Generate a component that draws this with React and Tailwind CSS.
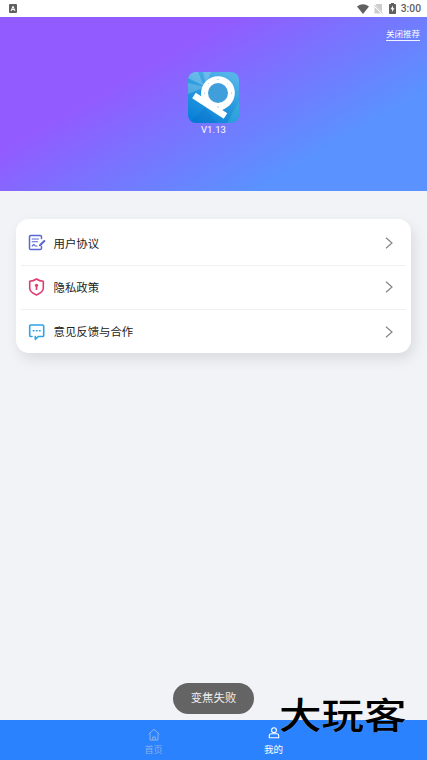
import React from "react";

const cjk = "font-['Roboto','Noto_Sans_CJK_SC',sans-serif]";

function StatusBar() {
  return (
    <div className="flex h-[17px] shrink-0 items-center bg-white pl-[9px] pr-[6px] text-[#606060]">
      <svg width="8" height="9" viewBox="0 0 8 9">
        <rect width="8" height="9" rx="1" fill="#606060" />
        <path d="M2 7 4 2.3 6 7M2.8 5.6h2.4" fill="none" stroke="#fff" strokeWidth="1" />
      </svg>
      <svg className="ml-auto" width="12" height="10" viewBox="0 0 12 10">
        <path d="M0 2.6Q6-2 12 2.6L6 10Z" fill="#606060" />
      </svg>
      <svg className="ml-[5px]" width="9" height="10" viewBox="0 0 9 10">
        <path d="M2.5 0H8v8L1.5 1.2ZM.5 3 7 9.5H.5Z" fill="#cdcdcd" />
        <path d="m0 .8 9 9" stroke="#bbb" strokeWidth=".8" />
      </svg>
      <svg className="ml-[6px]" width="7" height="11" viewBox="0 0 7 11">
        <path d="M2 0h3v1h1.3q.7 0 .7.7v8.6q0 .7-.7.7H.7Q0 11 0 10.300V1.700Q0 1 .7 1H2Z" fill="#606060" />
        <path d="M4 2.500 1.500 6.300h1.600v2.700L5.500 5.200H4Z" fill="#fff" />
      </svg>
      <span className="ml-[5px] mt-px font-['Roboto',sans-serif] text-[10.300px] font-medium leading-none">3:00</span>
    </div>
  );
}

function AppLogo() {
  return (
    <svg width="51" height="51" viewBox="0 0 51 51">
      <defs>
        <linearGradient id="logo" x1="0.200" y1="1" x2="0.700" y2="0">
          <stop offset="0" stopColor="#087fd8" />
          <stop offset=".55" stopColor="#2c9bde" />
          <stop offset="1" stopColor="#55b4ea" />
        </linearGradient>
        <clipPath id="tile"><rect width="51" height="51" rx="8" /></clipPath>
      </defs>
      <g clipPath="url(#tile)">
        <rect width="51" height="51" fill="url(#logo)" />
        <path d="M0 0h10l6 14L0 6Z" fill="#fff" opacity=".22" />
        <path d="M0 11 17 15 0 22Z" fill="#fff" opacity=".2" />
        <path d="M15 0h8l-5 14Z" fill="#fff" opacity=".2" />
        <path d="m39 51 12-22v22Z" fill="#55d2dc" opacity=".25" />
        <path d="m0 51 17-15 12 15Z" fill="#0866bd" opacity=".2" />
      </g>
      <path d="M13.300 19v7l20 13 4-3v-8H16Z" fill="#fff" />
      <circle cx="30" cy="21" r="13.400" fill="#409fdb" stroke="#fff" strokeWidth="6.800" />
      <path d="M6 23.500 37.500 44" stroke="#fff" strokeWidth="6.500" />
      <g fill="#73b9e2">
        <circle cx="30" cy="7.500" r=".6" /><circle cx="43.500" cy="21" r=".6" />
        <circle cx="16.500" cy="21" r=".6" /><circle cx="30" cy="35" r=".7" />
        <circle cx="39.500" cy="11.500" r=".4" /><circle cx="20.500" cy="11.500" r=".4" />
      </g>
    </svg>
  );
}

function DocumentIcon() {
  return (
    <svg width="18" height="18" viewBox="0 0 18 18" fill="none" stroke="#5867d4" strokeWidth="1.500" strokeLinecap="round" strokeLinejoin="round">
      <path d="M13.500 4.500V2.800Q13.500 1.500 12.200 1.500H2.800Q1.500 1.500 1.500 2.800v11.400q0 1.300 1.300 1.300h9.400q1.300 0 1.300-1.300V12.500" />
      <path d="M4.200 5h6.300M4.200 7.800h5.500M4.200 12l1.700-1.700 1.400 1.700H9" strokeWidth="1.100" />
      <path d="m12 11.200 4.300-4.200" strokeWidth="2.100" />
    </svg>
  );
}

function ShieldIcon() {
  return (
    <svg width="18" height="18" viewBox="0 0 18 18" fill="none" stroke="#df3c70" strokeWidth="1.600" strokeLinejoin="round">
      <path d="M8.500 1Q11.500 3.200 15.300 3.300v7Q15.300 14.200 8.500 17 1.700 14.200 1.700 10.300v-7Q5.500 3.200 8.500 1Z" />
      <circle cx="8.500" cy="7.300" r="1.600" fill="#df3c70" stroke="none" />
      <path d="M8.500 7v5" />
    </svg>
  );
}

function MessageIcon() {
  return (
    <svg width="18" height="18" viewBox="0 0 18 18" fill="none" stroke="#2da4e9" strokeWidth="1.600" strokeLinecap="round" strokeLinejoin="round">
      <path d="M4 13.500H2.800Q1.700 13.500 1.700 12.400V3.100Q1.700 2 2.800 2h11.800q1.100 0 1.100 1.100v9.300q0 1.100-1.100 1.100H10.300l-3 2.800V13.500" />
      <path d="M5.200 7.800h.8M8.300 7.800h.8M11.400 7.800h.8" strokeWidth="1.500" />
    </svg>
  );
}

function Row({ icon, label, last }) {
  return (
    <div className={`mx-[5px] flex h-[44px] items-center pb-px pl-[7px] pr-[13px] ${last ? "" : "border-b border-[#f0f0f2]"}`}>
      {icon}
      <span className="ml-[7.500px] mt-px text-[11.400px] leading-4 text-[#222]">{label}</span>
      <svg className="ml-auto" width="8" height="12" viewBox="0 0 8 12" fill="none" stroke="#858585" strokeWidth="1.200">
        <path d="m1 .7 6 5.300L1 11.300" />
      </svg>
    </div>
  );
}

export default function App() {
  return (
    <div className={`relative flex h-[760px] w-[427px] flex-col overflow-hidden bg-[#f2f3f7] ${cjk}`}>
      <StatusBar />
      <header className="relative flex h-[174px] shrink-0 flex-col items-center bg-[linear-gradient(150deg,#925bff_32%,#5a92ff_76%)] pt-[55px] text-white">
        <span className="absolute right-[7px] top-[12px] border-b border-white/90 text-[8.500px] leading-[11px]">关闭推荐</span>
        <AppLogo />
        <span className="mt-px text-[9.500px] leading-[11px] tracking-[0.100px]">V1.13</span>
      </header>
      <main className="flex-1 pl-[16px] pr-[16px] pt-[28px]">
        <section className="h-[134px] rounded-[13px] bg-white pt-[3px] shadow-[3px_6px_14px_rgba(0,0,0,0.100)]">
          <Row icon={<DocumentIcon />} label="用户协议" />
          <Row icon={<ShieldIcon />} label="隐私政策" />
          <Row icon={<MessageIcon />} label="意见反馈与合作" last />
        </section>
      </main>
      <nav className="flex h-[40px] shrink-0 justify-center bg-[#2b82fe] text-[9px] leading-[12px]">
        <div className="flex w-[120px] flex-col items-center pt-[8px] text-[#8eb2ea]">
          <svg width="12" height="13" viewBox="0 0 12 13" fill="none" stroke="currentColor" strokeWidth="1">
            <path d="M.6 6.200 6 1.300l5.400 4.900M2 5.500V12h8V5.500M4.700 12V9h2.600v3" />
          </svg>
          <span className="mt-[3px]">首页</span>
        </div>
        <div className="flex w-[120px] flex-col items-center pt-[7px] text-white">
          <svg width="12" height="12" viewBox="0 0 12 12" fill="none" stroke="currentColor" strokeWidth="1.100">
            <circle cx="6" cy="3.200" r="2.400" />
            <path d="M3.500 6.800h5q2.200 0 2.200 2v2H1.300v-2q0-2 2.200-2Z" />
          </svg>
          <span className="mt-[5px] text-[9.500px]">我的</span>
        </div>
      </nav>
      <div className="absolute left-[173px] top-[683px] flex h-[31px] w-[81px] items-center justify-center rounded-full bg-[#646464] pt-px text-[11.400px] text-[#eee]">变焦失败</div>
      <div className="absolute left-[279px] top-[693px] origin-center scale-y-[.85] whitespace-nowrap text-[42.500px] font-medium leading-[48px] text-black [text-shadow:0_0_1px_#ffffff80]">大玩客</div>
    </div>
  );
}
